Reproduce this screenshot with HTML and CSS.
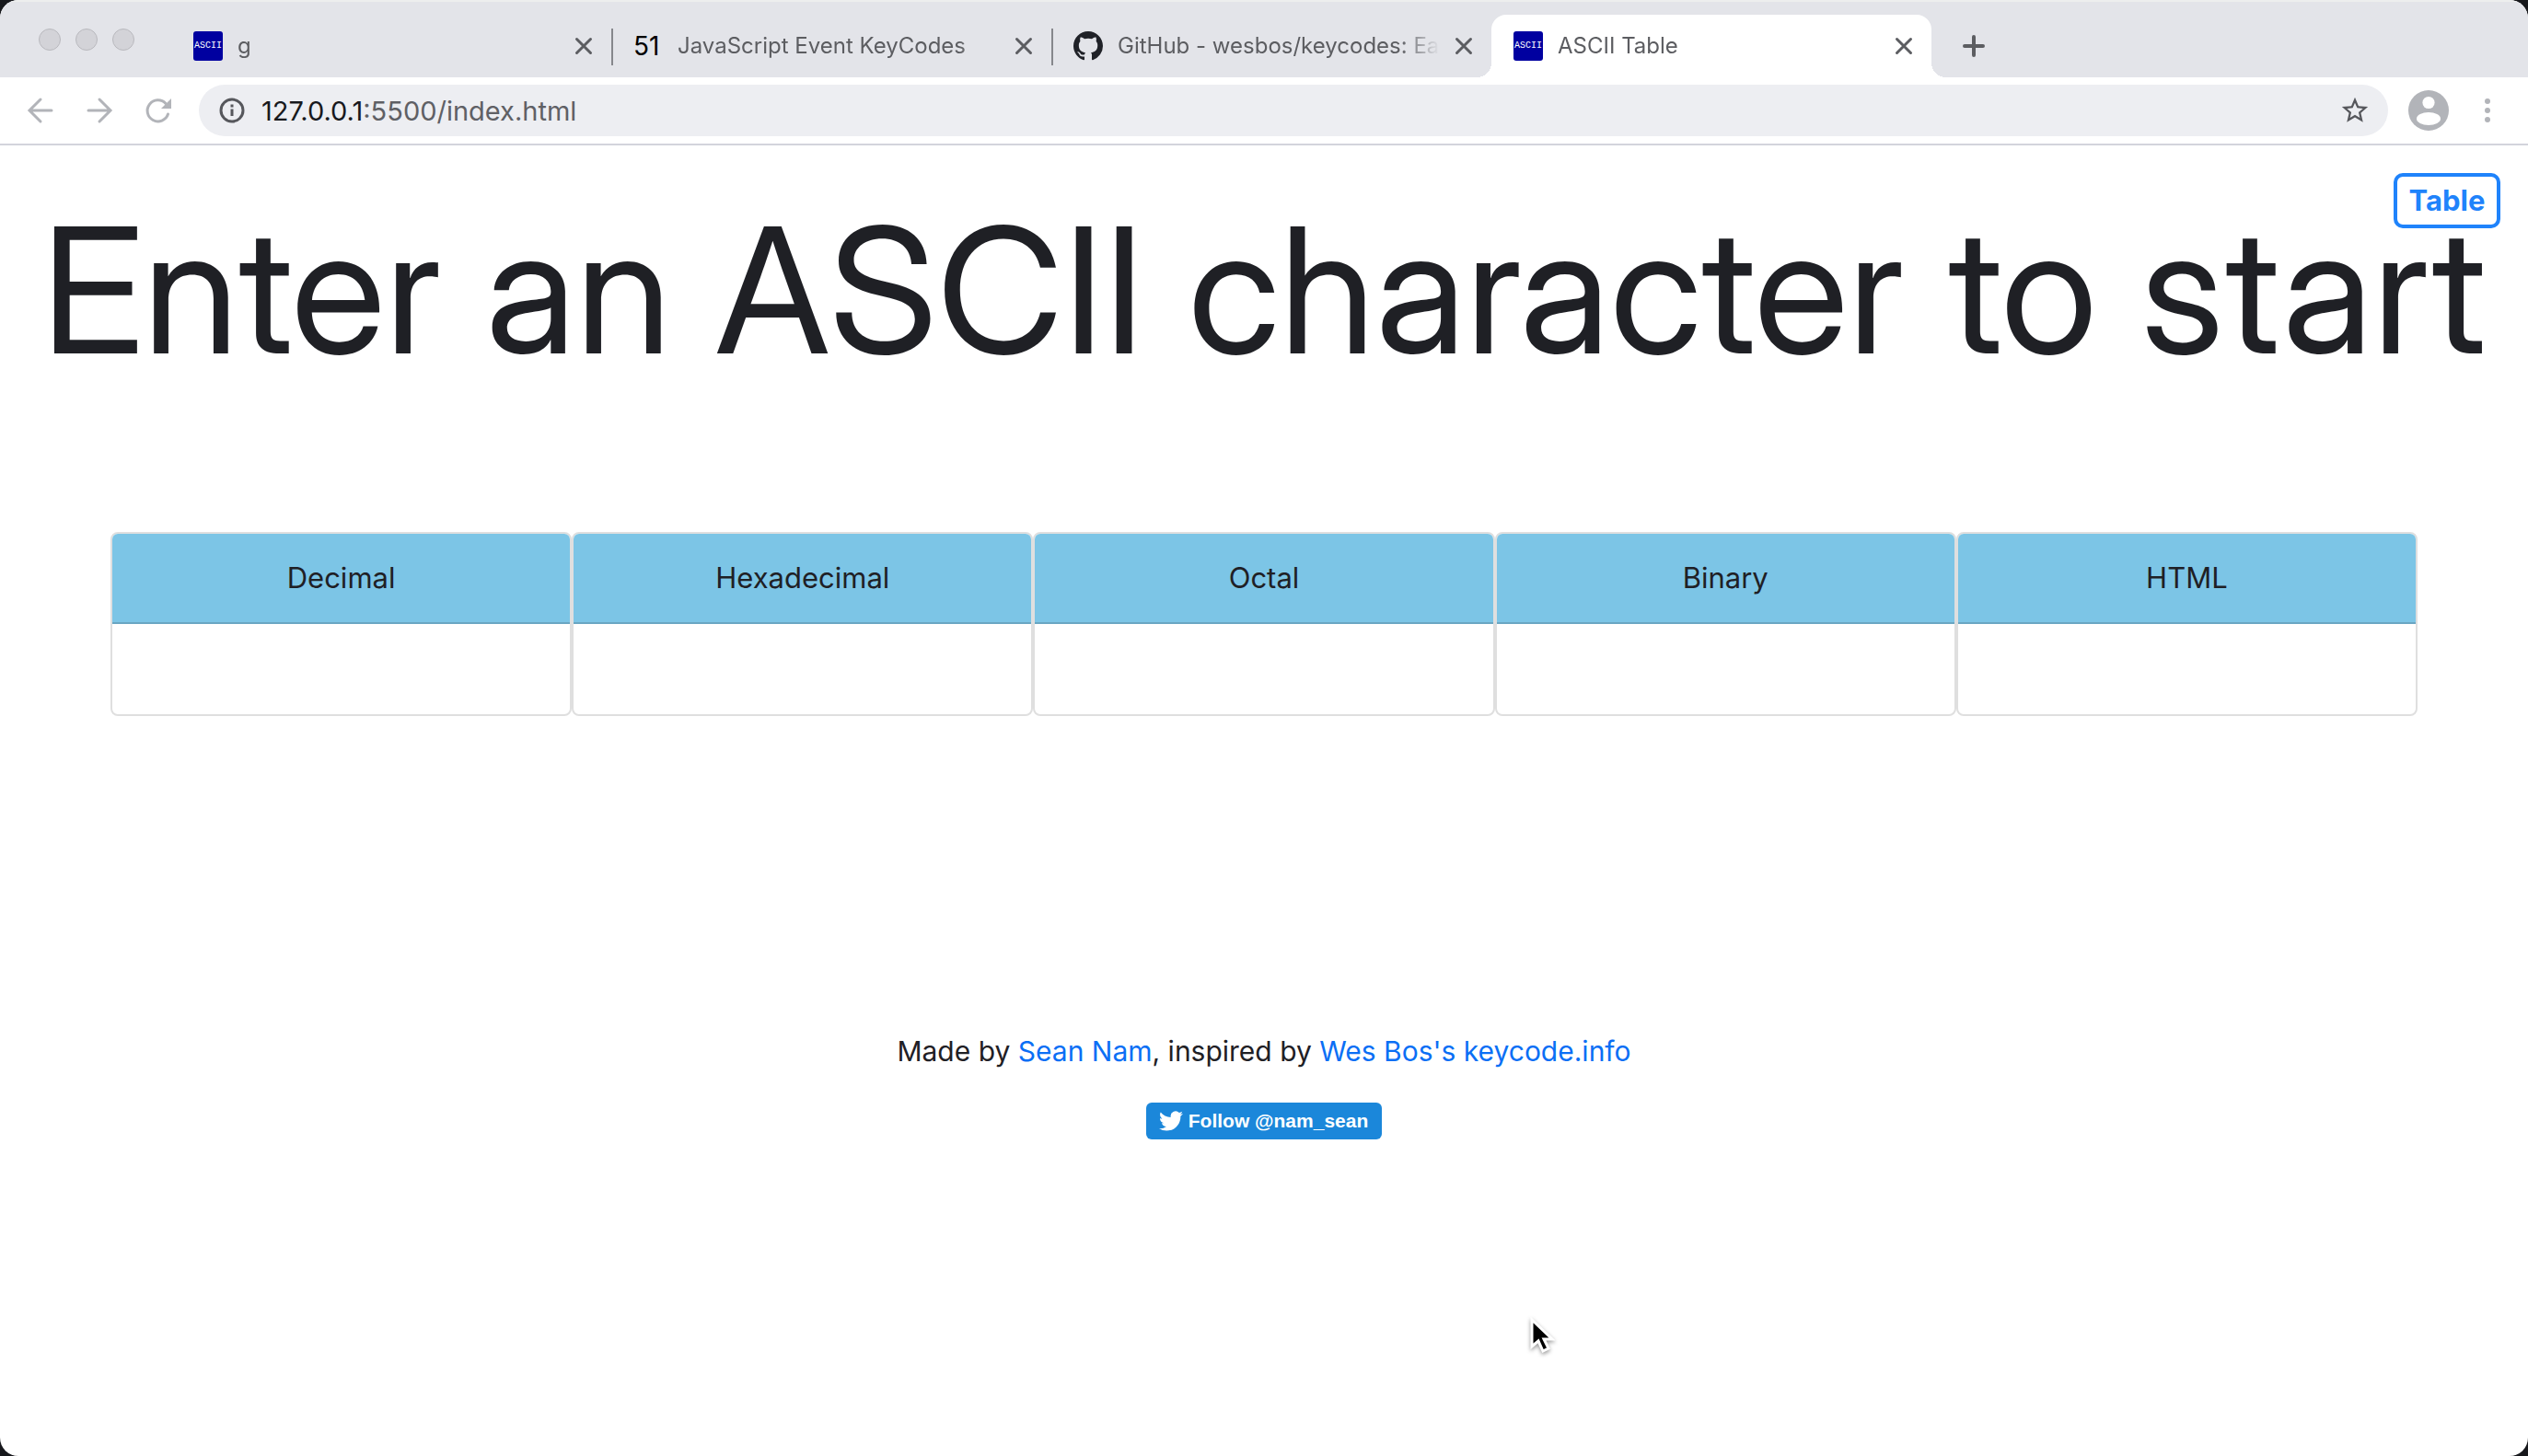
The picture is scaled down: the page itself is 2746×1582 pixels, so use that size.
FILE: index.html
```html
<!DOCTYPE html>
<html lang="en">
<head>
<meta charset="utf-8">
<meta name="viewport" content="width=device-width, initial-scale=1">
<title>ASCII Table</title>
<link rel="stylesheet" href="styles.css">
</head>
<body>
<div class="window">
  <header class="tabstrip">
    <div class="lights">
      <button class="light" aria-label="Close window"></button>
      <button class="light" aria-label="Minimise window"></button>
      <button class="light" aria-label="Zoom window"></button>
    </div>
    <div class="tabs">
      <div class="tab">
        <span class="favicon favicon-ascii">ASCII</span>
        <span class="tab-title">g</span>
        <button class="close" aria-label="Close tab"><svg viewBox="0 0 20 20"><path d="M2.500 2.500 17.500 17.500M17.500 2.500 2.500 17.500"/></svg></button>
      </div>
      <div class="tab divided">
        <span class="favicon favicon-number">51</span>
        <span class="tab-title">JavaScript Event KeyCodes</span>
        <button class="close" aria-label="Close tab"><svg viewBox="0 0 20 20"><path d="M2.500 2.500 17.500 17.500M17.500 2.500 2.500 17.500"/></svg></button>
      </div>
      <div class="tab divided">
        <svg class="favicon" viewBox="0 0 16 16"><path fill="#202228" d="M8 0C3.580 0 0 3.580 0 8c0 3.540 2.290 6.530 5.470 7.590.4.070.55-.17.55-.38 0-.19-.01-.82-.01-1.490-2.010.37-2.530-.49-2.690-.94-.09-.23-.48-.94-.82-1.130-.28-.15-.68-.52-.01-.53.63-.01 1.080.58 1.230.82.72 1.210 1.870.87 2.330.66.07-.52.28-.87.51-1.070-1.780-.2-3.640-.89-3.640-3.950 0-.87.31-1.590.82-2.150-.08-.2-.36-1.020.08-2.120 0 0 .67-.21 2.200.82.64-.18 1.320-.27 2-.27s1.360.09 2 .27c1.530-1.040 2.200-.82 2.200-.82.44 1.100.16 1.920.08 2.120.51.56.82 1.270.82 2.150 0 3.070-1.870 3.750-3.650 3.950.29.25.54.73.54 1.480 0 1.070-.01 1.930-.01 2.200 0 .21.15.46.55.38A8.010 8.010 0 0 0 16 8c0-4.420-3.580-8-8-8z"/></svg>
        <span class="tab-title">GitHub - wesbos/keycodes: Eas</span>
        <button class="close" aria-label="Close tab"><svg viewBox="0 0 20 20"><path d="M2.500 2.500 17.500 17.500M17.500 2.500 2.500 17.500"/></svg></button>
      </div>
      <div class="tab active">
        <span class="favicon favicon-ascii">ASCII</span>
        <span class="tab-title">ASCII Table</span>
        <button class="close" aria-label="Close tab"><svg viewBox="0 0 20 20"><path d="M2.500 2.500 17.500 17.500M17.500 2.500 2.500 17.500"/></svg></button>
      </div>
    </div>
    <button class="new-tab" aria-label="New tab"><svg viewBox="0 0 24 24"><path d="M12 2v20M2 12h20"/></svg></button>
  </header>

  <nav class="toolbar">
    <div class="nav-buttons">
      <button class="nav-button" aria-label="Back"><svg viewBox="0 0 32 32"><path d="M28 16H5M16 4 4 16l12 12"/></svg></button>
      <button class="nav-button" aria-label="Forward"><svg viewBox="0 0 32 32"><path d="M4 16h23M16 4l12 12-12 12"/></svg></button>
      <button class="nav-button" aria-label="Reload"><svg viewBox="0 0 32 32"><path d="M24 8.500A11.500 11.500 0 1 0 26.500 20"/><path class="solid" d="M30 3v11H19z"/></svg></button>
    </div>
    <div class="omnibox">
      <svg class="info" viewBox="0 0 28 28"><circle cx="14" cy="14" r="12"/><path d="M14 12.500V20M14 7.500v3"/></svg>
      <span class="url"><span class="host">127.0.0.1</span>:5500/index.html</span>
      <button class="star" aria-label="Bookmark"><svg viewBox="0 0 24 24"><path d="M22 9.240l-7.190-.62L12 2 9.190 8.630 2 9.240l5.460 4.730L5.820 21 12 17.270 18.180 21l-1.630-7.030L22 9.240zM12 15.400l-3.760 2.270 1-4.280-3.320-2.880 4.380-.38L12 6.100l1.710 4.040 4.380.38-3.320 2.880 1 4.280L12 15.400z"/></svg></button>
    </div>
    <button class="profile" aria-label="Profile"><svg viewBox="0 0 44 44"><circle cx="22" cy="22" r="22" fill="#b2b4b9"/><circle cx="22" cy="13.500" r="6.600" fill="#fff"/><ellipse cx="22" cy="31" rx="13" ry="7" fill="#fff"/></svg></button>
    <button class="menu" aria-label="Menu"><svg viewBox="0 0 6 26"><circle cx="3" cy="3" r="3"/><circle cx="3" cy="13" r="3"/><circle cx="3" cy="23" r="3"/></svg></button>
  </nav>

  <main class="page">
    <button class="table-button">Table</button>
    <h1 class="prompt">Enter an ASCII character to start</h1>
    <section class="cards">
      <article class="card"><h2 class="card-header">Decimal</h2><p class="card-body"></p></article>
      <article class="card"><h2 class="card-header">Hexadecimal</h2><p class="card-body"></p></article>
      <article class="card"><h2 class="card-header">Octal</h2><p class="card-body"></p></article>
      <article class="card"><h2 class="card-header">Binary</h2><p class="card-body"></p></article>
      <article class="card"><h2 class="card-header">HTML</h2><p class="card-body"></p></article>
    </section>
    <footer class="credits">
      <p class="byline">Made by <a href="#sean">Sean Nam</a>, inspired by <a href="#keycode">Wes Bos's keycode.info</a></p>
      <a class="follow" href="#follow"><svg viewBox="0 0 24 24"><path fill="#fff" d="M23.950 4.570a10 10 0 0 1-2.820.77 4.960 4.960 0 0 0 2.160-2.720c-.95.55-2 .95-3.130 1.180a4.920 4.920 0 0 0-8.380 4.480C7.690 8.090 4.070 6.130 1.640 3.160a4.820 4.820 0 0 0-.67 2.480c0 1.710.87 3.210 2.190 4.100a4.900 4.900 0 0 1-2.230-.62v.06a4.920 4.920 0 0 0 3.950 4.830 5 5 0 0 1-2.210.08 4.940 4.940 0 0 0 4.600 3.420A9.870 9.870 0 0 1 0 19.540a13.990 13.990 0 0 0 7.550 2.210c9.050 0 14-7.500 14-13.980 0-.21 0-.42-.02-.63a9.940 9.940 0 0 0 2.460-2.550z"/></svg>Follow @nam_sean</a>
    </footer>
    <svg class="cursor" viewBox="0 0 28 42"><path d="M3 3v29l7-6 5 11 6-3-5-10h9z" fill="#000" stroke="#fff" stroke-width="3"/></svg>
  </main>
</div>
</body>
</html>
```
FILE: styles.css
```css
* { box-sizing: border-box; }

html { background: #17181c; }

body {
  margin: 0;
  font-family: Inter, "Liberation Sans", sans-serif;
  color: #1f2025;
}

button {
  padding: 0;
  border: 0;
  background: none;
  font: inherit;
}

svg { display: block; }

.window {
  display: flex;
  flex-direction: column;
  min-height: 100vh;
  border-radius: 20px;
  background: #fff;
  overflow: hidden;
}

/* Tab strip */
.tabstrip {
  display: flex;
  height: 84px;
  border-top: 2px solid #edeeee;
  background: #e3e4e9;
}

.lights {
  display: flex;
  gap: 16px;
  width: 186px;
  padding: 29px 0 0 42px;
}

.light {
  width: 24px;
  height: 24px;
  border: 1px solid #b9b9be;
  border-radius: 50%;
  background: #d3d3d8;
}

.tabs {
  display: flex;
  flex: 0 1 1912px;
  padding-top: 14px;
}

.tab {
  display: flex;
  flex: 1;
  align-items: center;
  gap: 16px;
  min-width: 0;
  padding: 0 20px 0 24px;
  font-size: 24px;
  line-height: 32px;
  color: #5c5d61;
}

.divided {
  background: linear-gradient(#86878c, #86878c) no-repeat 0 15px / 2px 40px;
}

.active {
  position: relative;
  border-radius: 16px 16px 0 0;
  background: #fff;
}

/* Flared feet that join the active tab to the toolbar */
.active::before,
.active::after {
  content: "";
  position: absolute;
  bottom: 0;
  width: 16px;
  height: 16px;
}

.active::before {
  right: 100%;
  background: radial-gradient(circle at 0 0, transparent 16px, #fff 16px);
}

.active::after {
  left: 100%;
  background: radial-gradient(circle at 100% 0, transparent 16px, #fff 16px);
}

.favicon {
  flex: none;
  width: 32px;
  height: 32px;
}

.favicon-ascii {
  border-radius: 3px;
  background: #0000a0;
  font-family: "Liberation Mono", monospace;
  font-size: 10px;
  text-align: center;
  color: #fff;
}

.favicon-number {
  font-size: 28px;
  color: #000;
}

.tab-title {
  flex: 1;
  overflow: hidden;
  white-space: nowrap;
  mask-image: linear-gradient(to right, #000 calc(100% - 44px), transparent);
}

.close,
.new-tab {
  fill: none;
  stroke: #5c5d61;
  stroke-linecap: round;
}

.close {
  width: 20px;
  stroke-width: 3;
}

.new-tab {
  align-self: center;
  width: 24px;
  margin: 14px 0 0 34px;
  stroke-width: 4;
}

/* Toolbar */
.toolbar {
  display: flex;
  align-items: center;
  height: 74px;
  padding: 0 41px 0 28px;
  border-bottom: 2px solid #d3d4dc;
}

.nav-buttons {
  display: flex;
  gap: 32px;
  width: 188px;
}

.nav-button {
  width: 32px;
  fill: none;
  stroke: #b2b4b9;
  stroke-width: 3;
  stroke-linecap: round;
}

.solid {
  fill: #b2b4b9;
  stroke: none;
}

.omnibox {
  display: flex;
  flex: 1;
  align-items: center;
  gap: 18px;
  height: 56px;
  padding: 0 19px 0 22px;
  border-radius: 28px;
  background: #edeef2;
}

.info {
  width: 28px;
  fill: none;
  stroke: #56575c;
  stroke-width: 3;
}

.url {
  flex: 1;
  font-size: 29px;
  color: #5f6065;
}

.host { color: #18191d; }

.star {
  width: 34px;
  fill: #56575c;
}

.profile {
  width: 44px;
  margin: 0 39px 0 22px;
}

.menu {
  width: 6px;
  fill: #b2b4b9;
}

/* Page */
.page {
  position: relative;
  flex: 1;
  padding: 62px 0 40px;
  font-size: 31px;
  line-height: 48px;
}

.table-button {
  position: absolute;
  top: 30px;
  right: 30px;
  width: 116px;
  height: 60px;
  border: 4px solid #1f83fb;
  border-radius: 10px;
  font-weight: 700;
  line-height: 48px;
  color: #1f83fb;
}

.prompt {
  margin: 0;
  font-family: "Inter Display", Inter, sans-serif;
  font-size: 190px;
  font-weight: 400;
  line-height: 190px;
  text-align: center;
  white-space: nowrap;
}

.cards {
  display: grid;
  grid-template-columns: repeat(5, 1fr);
  margin: 168px 120px 0;
}

.card {
  border: 2px solid #dfdfdf;
  border-radius: 8px;
  overflow: hidden;
}

.card-header {
  margin: 0;
  padding: 24px;
  border-bottom: 2px solid #6aa6c3;
  background: #7cc5e6;
  font-size: 31px;
  font-weight: 400;
  line-height: 48px;
  text-align: center;
}

.card-body {
  min-height: 98px;
  margin: 0;
}

.credits {
  display: flex;
  flex-direction: column;
  align-items: center;
  margin-top: 340px;
}

.byline {
  margin: 0 0 32px;
  font-size: 30px;
}

.credits a {
  color: #0b6ff5;
  text-decoration: none;
}

.credits .follow {
  display: flex;
  align-items: center;
  gap: 6px;
  height: 40px;
  padding: 0 15px 0 14px;
  border-radius: 6px;
  background: #1b87da;
  font-family: "Liberation Sans", sans-serif;
  font-size: 21px;
  font-weight: 700;
  color: #fff;
}

.follow svg { width: 26px; }

.cursor {
  position: absolute;
  top: 1273px;
  left: 1661px;
  width: 28px;
  filter: drop-shadow(0 2px 2px #0006);
}
```
